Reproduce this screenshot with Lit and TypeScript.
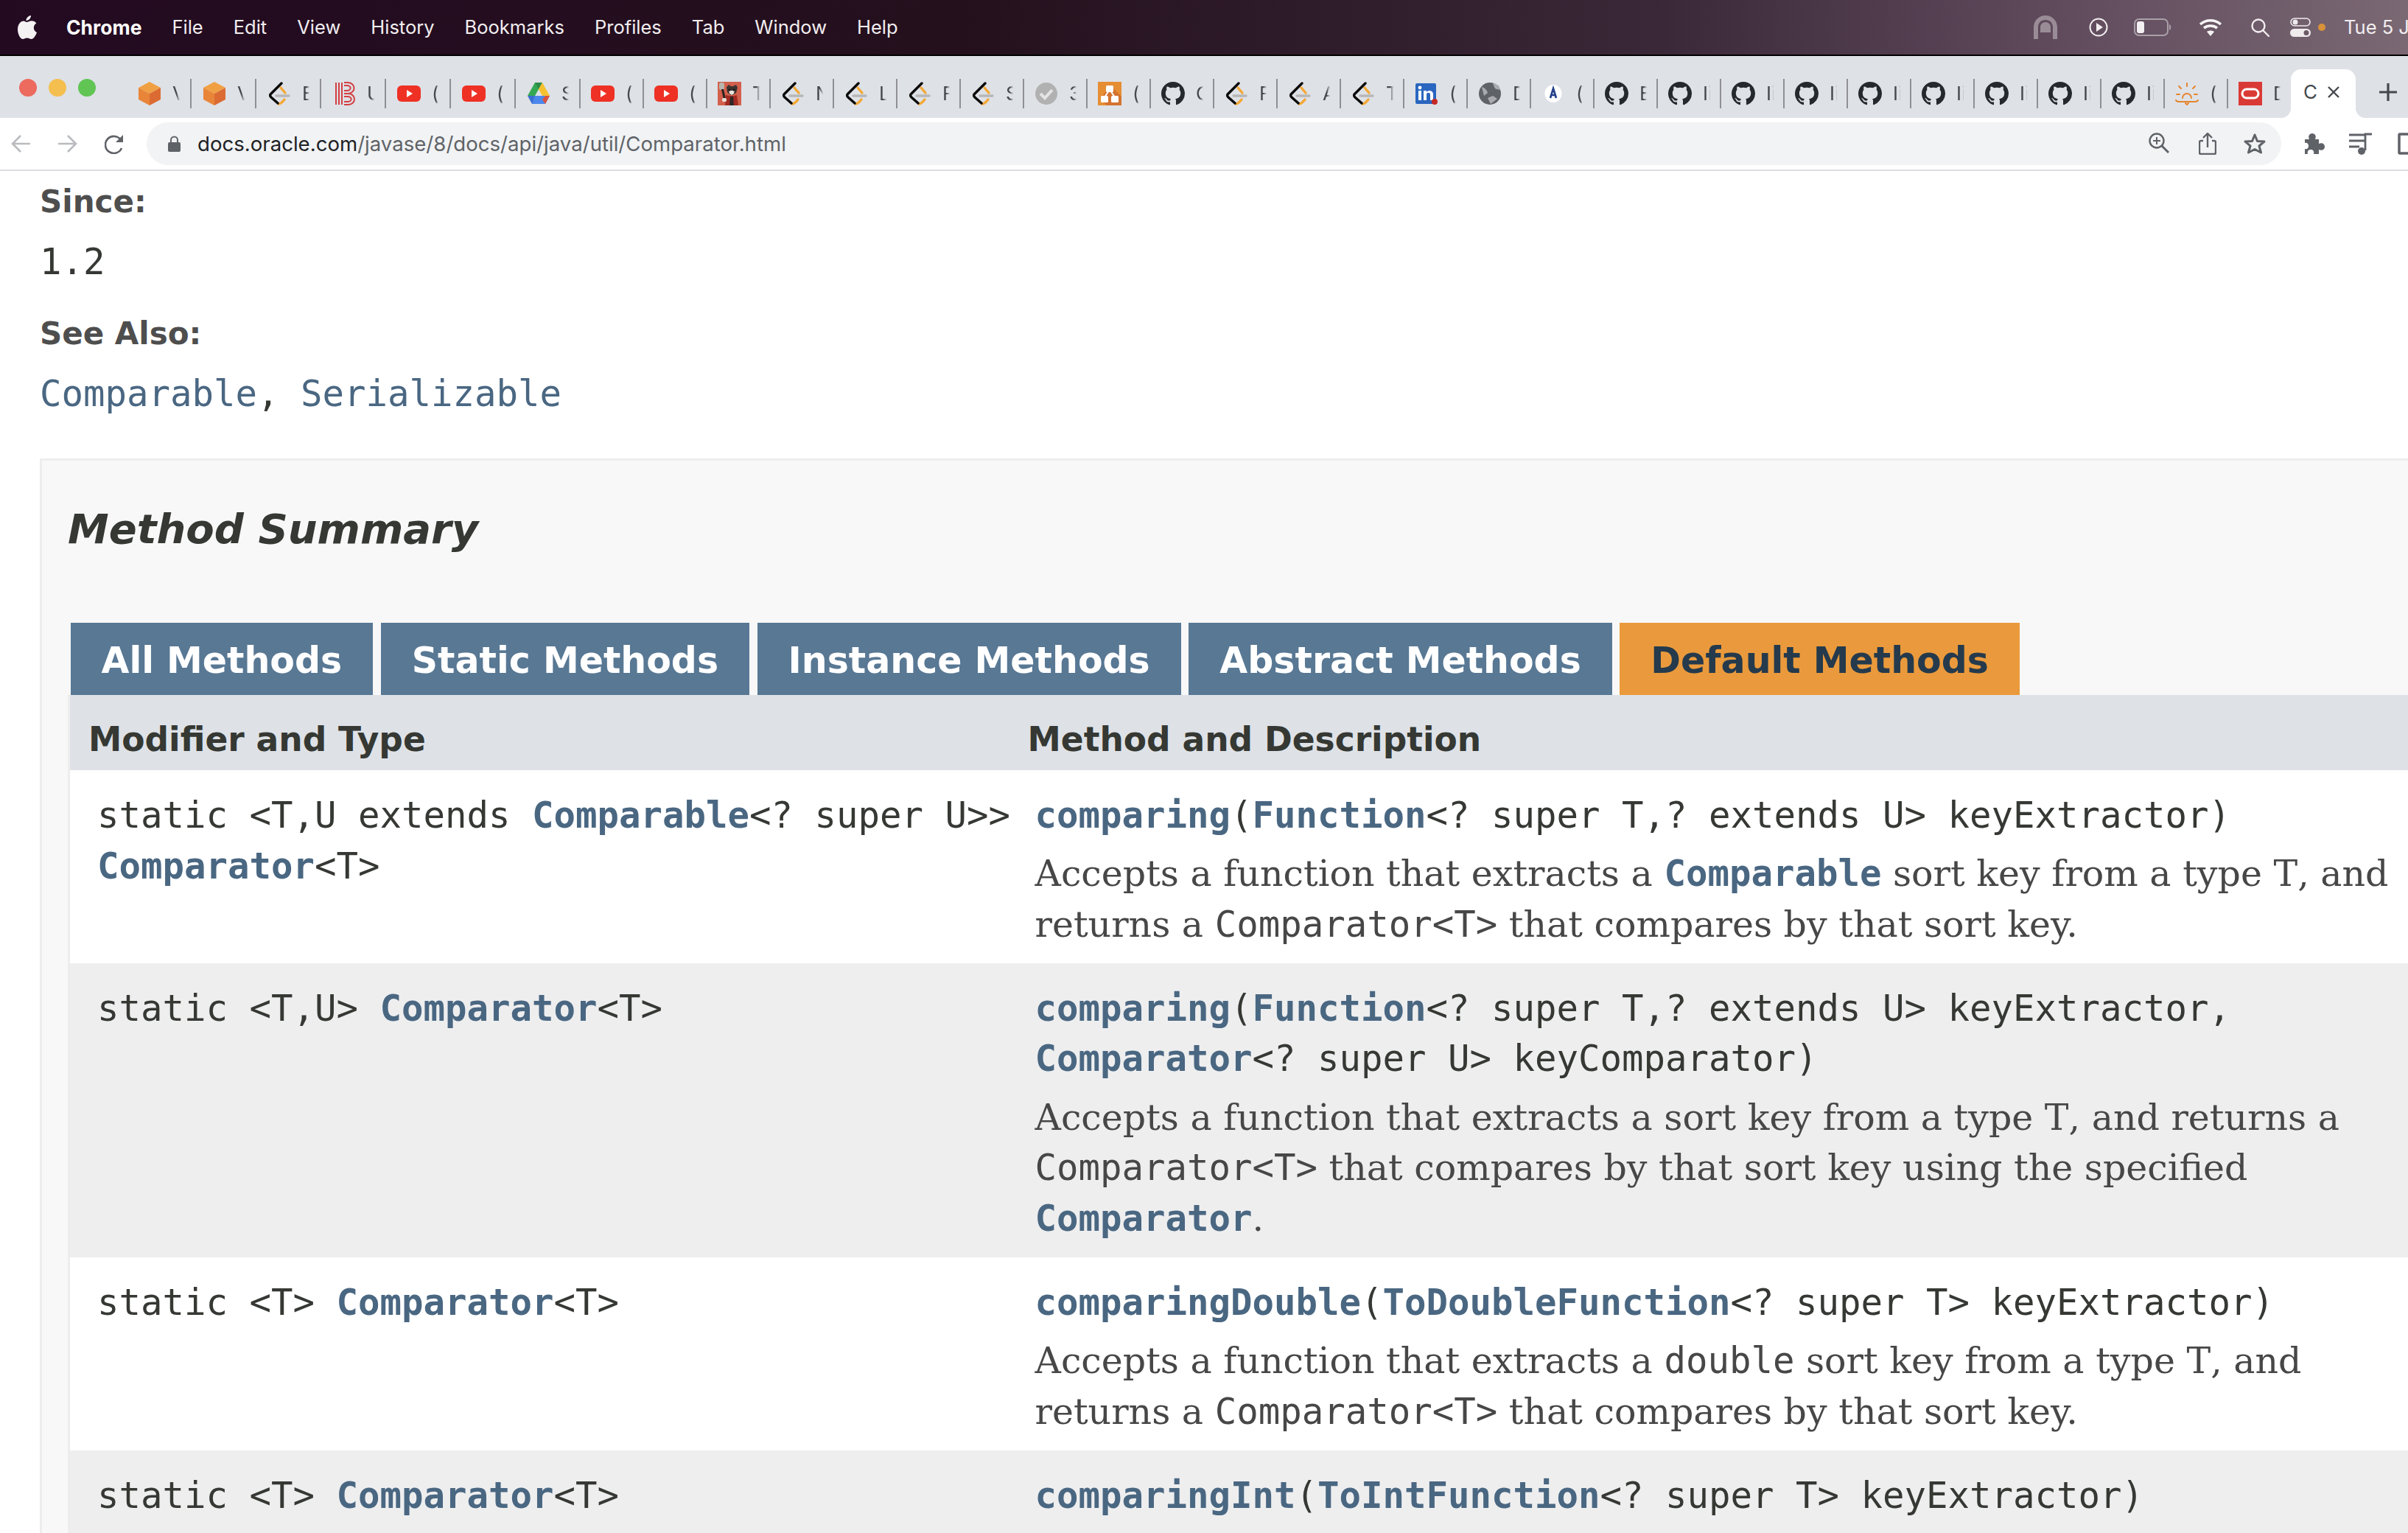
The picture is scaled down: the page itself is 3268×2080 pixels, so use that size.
import { css, html, LitElement, TemplateResult } from 'lit';
import { customElement } from 'lit/decorators.js';

const GITHUB =
  'M8 0C3.58 0 0 3.58 0 8c0 3.54 2.29 6.53 5.47 7.59.4.07.55-.17.55-.38 0-.19-.01-.82-.01-1.49-2.01.37-2.53-.49-2.69-.94-.09-.23-.48-.94-.82-1.13-.28-.15-.68-.52-.01-.53.63-.01 1.08.58 1.23.82.72 1.21 1.87.87 2.33.66.07-.52.28-.87.51-1.07-1.78-.2-3.64-.89-3.64-3.95 0-.87.31-1.59.82-2.15-.08-.2-.36-1.02.08-2.12 0 0 .67-.21 2.2.82.64-.18 1.32-.27 2-.27.68 0 1.36.09 2 .27 1.53-1.04 2.2-.82 2.2-.82.44 1.1.16 1.92.08 2.12.51.56.82 1.27.82 2.15 0 3.07-1.87 3.75-3.65 3.95.29.25.54.73.54 1.48 0 1.07-.01 1.93-.01 2.2 0 .21.15.46.55.38A8.013 8.013 0 0016 8c0-4.42-3.58-8-8-8z';

const favicons: Record<string, TemplateResult> = {
  box: html`<svg viewBox="0 0 32 32">
    <polygon points="16,0 31,8 16,16 1,8" fill="#f0a043" />
    <polygon points="1,8 16,16 16,32 1,24" fill="#e98538" />
    <polygon points="31,8 16,16 16,32 31,24" fill="#dc6b33" />
  </svg>`,
  leet: html`<svg viewBox="0 0 32 32" fill="none" stroke-width="3.400" stroke-linecap="round" stroke-linejoin="round">
    <path d="M12 19h17" stroke="#b7b7b7" />
    <path d="M18 8l6 7M15 30c3 0 5-2 8-6" stroke="#f4a836" />
    <path d="M19 2L4 17c-1 2 0 3 1 4l9 8" stroke="#0b0b0b" />
  </svg>`,
  book: html`<svg viewBox="0 0 32 32" fill="none" stroke="#d33f42" stroke-width="2">
    <path d="M5 1v30M9 1v30M13 1v30M16 1h5a8 7 0 010 15h-5M16 16h6a8 7.500 0 010 15h-6M16 5h4a4 3 0 010 7h-4M16 20h5a4 3 0 010 7h-5" />
  </svg>`,
  yt: html`<svg viewBox="0 0 32 32">
    <rect x="0" y="5" width="32" height="22" rx="6" fill="#ee3124" />
    <polygon points="13,11 13,21 21,16" fill="#fff" />
  </svg>`,
  drive: html`<svg viewBox="0 0 32 32">
    <polygon points="11,1 21,1 11,19 1,19" fill="#34a853" />
    <polygon points="11,1 21,1 16,10" fill="#2f8a49" />
    <polygon points="21,1 31,19 21,19 16,10" fill="#f6c12f" />
    <polygon points="7,19 31,19 25,30 7,30" fill="#4c87ec" />
    <polygon points="1,19 7,19 11,19 7,30" fill="#3b6fd1" />
    <polygon points="25,19 31,19 25,30 21,24" fill="#d9543f" />
  </svg>`,
  raccoon: html`<svg viewBox="0 0 32 32">
    <rect width="32" height="32" fill="#d2604c" />
    <rect x="2" y="1" width="7" height="10" rx="3" fill="#b9b6ae" />
    <path d="M5 10l3 14 3-1-3-13z" fill="#2b2321" />
    <path d="M12 7l3-3 3 2h3l4-2 2 4-2 7-5 3h-3l-4-4z" fill="#3a3330" />
    <path d="M15 11l4 1 4-1-1 5-3 2-3-2z" fill="#e9e3da" />
    <circle cx="16" cy="11" r="1.600" fill="#191514" />
    <circle cx="22" cy="11" r="1.600" fill="#191514" />
    <path d="M11 18l5 1h6l4-1 2 14H10z" fill="#a32a22" />
    <path d="M17 20h4l1 12h-6z" fill="#2f2725" />
    <rect x="6" y="22" width="6" height="5" rx="2" fill="#e6e0d8" />
  </svg>`,
  check: html`<svg viewBox="0 0 32 32">
    <circle cx="16" cy="16" r="15" fill="#b1b1b1" />
    <path d="M8 16l6 6 10-11" fill="none" stroke="#e4e4e4" stroke-width="4" />
  </svg>`,
  drawio: html`<svg viewBox="0 0 32 32">
    <rect width="32" height="32" fill="#e68e33" />
    <path d="M16 4l16 16v12H12L4 24z" fill="#d4732f" />
    <path d="M15 12L9 21M17 12l6 9" stroke="#fff" stroke-width="2" />
    <rect x="11" y="5" width="10" height="9" rx="1.500" fill="#fff" />
    <rect x="4" y="19" width="10" height="9" rx="1.500" fill="#fff" />
    <rect x="18" y="19" width="10" height="9" rx="1.500" fill="#fff" />
  </svg>`,
  github: html`<svg viewBox="0 0 16 16"><path d=${GITHUB} fill="#24292e" /></svg>`,
  linkedin: html`<svg viewBox="0 0 32 32">
    <rect x="1" y="2" width="28" height="28" rx="2" fill="#2a66bf" />
    <rect x="5" y="12" width="4" height="13" fill="#fff" />
    <circle cx="7" cy="8" r="2.400" fill="#fff" />
    <path d="M12 12h4v2c2-3 8-3 9 2v9h-4v-8c0-3-5-3-5 0v8h-4z" fill="#fff" />
    <circle cx="27" cy="27" r="4" fill="#c52a25" />
  </svg>`,
  globe: html`<svg viewBox="0 0 32 32">
    <circle cx="16" cy="16" r="15" fill="#5f6368" />
    <path d="M5 7c4 1 7 4 8 8l-5 4zM19 1c3 3 2 8 6 9l5 1-2-6zM13 22l7-3 6 4-9 7z" fill="#a9abae" />
  </svg>`,
  a: html`<svg viewBox="0 0 32 32">
    <ellipse cx="16" cy="16" rx="11.500" ry="12" fill="#fff" />
    <path d="M12 22l4-13 4 13M13.500 18h5" fill="none" stroke="#23408a" stroke-width="2.600" />
  </svg>`,
  sun: html`<svg viewBox="0 0 32 32" fill="none" stroke="#e5852f" stroke-width="2" stroke-linecap="round">
    <path d="M10 22a6 6 0 1112 0M16 2v4M5 6l3 3M27 6l-3 3M2 17h4M26 17h4M1 25c1 2 3 2 4 2h22c1 0 3 0 4-2M14 29l2 2 2-2" />
  </svg>`,
  oracle: html`<svg viewBox="0 0 32 32">
    <rect width="32" height="32" fill="#da3a36" />
    <rect x="5" y="10" width="22" height="12" rx="6" fill="none" stroke="#fff" stroke-width="3" />
  </svg>`,
};

const TABS: [string, string][] = [
  ['box', 'V'], ['box', 'V'], ['leet', 'E'], ['book', 'U'], ['yt', '('], ['yt', '('], ['drive', 'S'],
  ['yt', '('], ['yt', '('], ['raccoon', 'T'], ['leet', 'N'], ['leet', 'L'], ['leet', 'F'], ['leet', 'S'],
  ['check', '3'], ['drawio', '('], ['github', 'C'], ['leet', 'F'], ['leet', 'A'], ['leet', 'T'],
  ['linkedin', '('], ['globe', 'D'], ['a', '('], ['github', 'E'], ['github', 'Ii'], ['github', 'Ii'],
  ['github', 'Ii'], ['github', 'Ii'], ['github', 'Ii'], ['github', 'Ii'], ['github', 'Ii'], ['github', 'Ii'],
  ['sun', '('], ['oracle', 'D'],
];

const MENU = ['File', 'Edit', 'View', 'History', 'Bookmarks', 'Profiles', 'Tab', 'Window', 'Help'];
const CAPTIONS = ['All Methods', 'Static Methods', 'Instance Methods', 'Abstract Methods', 'Default Methods'];

@customElement('app-root')
export class AppRoot extends LitElement {
  static styles = css`
    :host {
      display: block;
    }
    .page {
      width: 3268px;
      height: 2080px;
      overflow: hidden;
      background: #fff;
    }

    /* macOS menu bar */
    .menubar {
      height: 74px;
      border-bottom: 2px solid #000;
      display: flex;
      align-items: center;
      background: linear-gradient(90deg, #230a21 0, #24101d 40%, #3a2838 69%, #5f4a5c 85%, #7a6873 100%);
      color: #f2eef0;
      font: 25.5px 'Inter', 'Liberation Sans', sans-serif;
      white-space: nowrap;
      overflow: hidden;
    }
    .apple {
      width: 26px;
      height: 34px;
      margin-left: 24px;
      margin-right: 40px;
    }
    .menu {
      display: flex;
      gap: 41px;
      padding-bottom: 1px;
    }
    .menu b {
      font-weight: 700;
      font-size: 26.500px;
      color: #fff;
    }
    .status {
      margin-left: auto;
      display: flex;
      align-items: center;
      width: 508px;
      flex: none;
    }
    .status svg {
      display: block;
      flex: none;
    }
    .s-play { margin-left: 43px; }
    .s-batt { margin-left: 35px; }
    .s-wifi { margin-left: 37px; }
    .s-find { margin-left: 39px; }
    .s-ctrl { margin-left: 28px; }
    .s-dot { margin-left: 10px; }
    .s-clock { margin-left: 25px; padding-bottom: 1px; }

    /* tab strip */
    .strip {
      height: 84px;
      display: flex;
      background: #dee1e6;
      color: #45484d;
      font: 26px 'Inter', 'Liberation Sans', sans-serif;
    }
    .lights {
      width: 171px;
      flex: none;
      box-sizing: border-box;
      padding: 31px 0 0 26px;
      display: flex;
      gap: 16px;
    }
    .lights i {
      width: 24px;
      height: 24px;
      border-radius: 50%;
    }
    .tab {
      flex: none;
      width: 86px;
      height: 40px;
      margin-top: 31px;
      box-sizing: border-box;
      position: relative;
      display: flex;
      align-items: center;
    }
    .tab.wide {
      width: 88px;
    }
    .tab::after {
      content: '';
      position: absolute;
      right: -1px;
      top: 0;
      width: 2px;
      height: 40px;
      background: #8e9094;
    }
    .tab.last::after {
      display: none;
    }
    .fav {
      width: 32px;
      height: 32px;
      margin-left: 15px;
      flex: none;
    }
    .tab.wide .fav {
      margin-left: 16px;
    }
    .fav svg {
      display: block;
      width: 32px;
      height: 32px;
    }
    .title {
      margin-left: 15px;
      width: 12px;
      overflow: hidden;
      white-space: nowrap;
      line-height: 40px;
      -webkit-mask-image: linear-gradient(90deg, #000 45%, transparent 85%);
      mask-image: linear-gradient(90deg, #000 45%, transparent 85%);
    }
    .active {
      flex: none;
      width: 88px;
      margin-top: 18px;
      height: 66px;
      background: #fff;
      border-radius: 14px 14px 0 0;
      position: relative;
      display: flex;
      align-items: flex-start;
      padding: 16px 0 0 17px;
      box-sizing: border-box;
      line-height: 30px;
    }
    .active::before,
    .active::after {
      content: '';
      position: absolute;
      bottom: 0;
      width: 14px;
      height: 14px;
    }
    .active::before {
      left: -14px;
      background: radial-gradient(circle at 0 0, transparent 14px, #fff 14.5px);
    }
    .active::after {
      right: -14px;
      background: radial-gradient(circle at 100% 0, transparent 14px, #fff 14.5px);
    }
    .close {
      width: 18px;
      height: 18px;
      margin: 6px 0 0 13px;
    }
    .plus {
      width: 24px;
      height: 24px;
      margin: 37px 0 0 32px;
      flex: none;
    }

    /* toolbar */
    .toolbar {
      height: 70px;
      border-bottom: 2px solid #dadce0;
      background: #fff;
      display: flex;
      align-items: center;
      overflow: hidden;
    }
    .nav {
      display: flex;
      width: 199px;
      flex: none;
      align-items: center;
      padding-left: 15px;
      box-sizing: border-box;
    }
    .nav svg {
      display: block;
      flex: none;
    }
    .fwd { margin-left: 38px; }
    .reload { margin-left: 37px; }
    .omni {
      width: 2897px;
      height: 58px;
      flex: none;
      box-sizing: border-box;
      border-radius: 29px;
      background: #f1f3f4;
      display: flex;
      align-items: center;
      padding: 0 21px 0 29px;
      font: 27.6px 'Inter', 'Liberation Sans', sans-serif;
      color: #5f6368;
      white-space: nowrap;
    }
    .omni svg {
      display: block;
      flex: none;
    }
    .omni b {
      font-weight: 400;
      color: #202124;
    }
    .url {
      margin-left: 23px;
      flex: 1;
    }
    .o-share { margin-left: 40px; }
    .o-star { margin-left: 37px; }
    .ext {
      display: flex;
      align-items: center;
      flex: none;
    }
    .ext svg {
      display: block;
      flex: none;
    }
    .e-puzzle { margin-left: 29px; }
    .e-media { margin-left: 33px; }
    .e-side { margin-left: 34px; }

    /* javadoc page */
    .doc {
      width: 3500px;
      padding: 13px 0 0 54px;
      box-sizing: border-box;
      color: #353833;
      font-family: 'DejaVu Sans', Arial, sans-serif;
    }
    .label {
      font-size: 42px;
      line-height: 58.8px;
      font-weight: 700;
      color: #4e4e4e;
    }
    .code {
      font-family: 'DejaVu Sans Mono', monospace;
      font-size: 49px;
      line-height: 68.6px;
    }
    a {
      color: #4a6782;
      text-decoration: none;
    }
    .since { margin-top: 18px; }
    .also { margin-top: 33.7px; }
    .links { margin-top: 18px; }
    .summary {
      margin-top: 52.7px;
      border: 3.5px solid #ededed;
      background: #f8f8f8;
      padding: 0 0 0 35px;
    }
    h3 {
      margin: 54px 0 87.5px;
      font-size: 56px;
      line-height: 78.4px;
      font-style: italic;
      font-weight: 700;
      color: #353833;
    }
    .caps {
      display: flex;
      gap: 10.5px;
      margin-left: 3.5px;
    }
    .cap {
      padding: 23.5px 42px 18.5px;
      font-size: 49px;
      line-height: 56px;
      font-weight: 700;
      background: #587894;
      color: #fff;
      white-space: nowrap;
    }
    .cap.on {
      background: #ea9a3c;
      color: #253a4c;
    }
    .table {
      border-left: 3.5px solid #ededed;
      background: #fff;
      width: 3400px;
    }
    .row {
      display: grid;
      grid-template-columns: 1271.5px 1fr;
      padding-bottom: 17.5px;
    }
    .row.alt {
      background: #eeeeef;
    }
    .row.head {
      background: #dee2e7;
      padding: 0;
      height: 102px;
    }
    .row.head div {
      padding: 28.5px 0 0 25px;
      font-size: 45.5px;
      line-height: 63.7px;
      font-weight: 700;
    }
    .row.head div + div {
      padding-left: 28px;
    }
    .first {
      padding: 28px 0 0 37px;
      white-space: nowrap;
    }
    .second {
      padding: 28px 0 0 38px;
      width: 1938px;
      box-sizing: border-box;
    }
    .code b {
      font-weight: 700;
    }
    .block {
      margin-top: 10.5px;
      font-family: 'DejaVu Serif', Georgia, serif;
      font-size: 49px;
      line-height: 68.6px;
      color: #474747;
    }
    .block code {
      font-family: 'DejaVu Sans Mono', monospace;
    }
    .block b {
      font-family: 'DejaVu Sans Mono', monospace;
    }
    .nokern {
      font-kerning: none;
    }
  `;

  private renderMethodRows() {
    const lnk = (t: string) => html`<a><b>${t}</b></a>`;
    const mono = (t: string) => html`<code>${t}</code>`;
    const typeT = html`<span class="nokern">T,</span>`;
    return html`
      <div class="row">
        <div class="first code">static &lt;T,U extends ${lnk('Comparable')}&lt;? super U&gt;&gt;<br />${lnk('Comparator')}&lt;T&gt;</div>
        <div class="second">
          <div class="code">${lnk('comparing')}(${lnk('Function')}&lt;? super T,? extends U&gt; keyExtractor)</div>
          <div class="block">Accepts a function that extracts a ${lnk('Comparable')} sort key from a type ${typeT} and returns a ${mono('Comparator<T>')} that compares by that sort key.</div>
        </div>
      </div>
      <div class="row alt">
        <div class="first code">static &lt;T,U&gt; ${lnk('Comparator')}&lt;T&gt;</div>
        <div class="second">
          <div class="code">${lnk('comparing')}(${lnk('Function')}&lt;? super T,? extends U&gt; keyExtractor, ${lnk('Comparator')}&lt;? super U&gt; keyComparator)</div>
          <div class="block">Accepts a function that extracts a sort key from a type ${typeT} and returns a ${mono('Comparator<T>')} that compares by that sort key using the specified ${lnk('Comparator')}.</div>
        </div>
      </div>
      <div class="row">
        <div class="first code">static &lt;T&gt; ${lnk('Comparator')}&lt;T&gt;</div>
        <div class="second">
          <div class="code">${lnk('comparingDouble')}(${lnk('ToDoubleFunction')}&lt;? super T&gt; keyExtractor)</div>
          <div class="block">Accepts a function that extracts a ${mono('double')} sort key from a type ${typeT} and returns a ${mono('Comparator<T>')} that compares by that sort key.</div>
        </div>
      </div>
      <div class="row alt">
        <div class="first code">static &lt;T&gt; ${lnk('Comparator')}&lt;T&gt;</div>
        <div class="second">
          <div class="code">${lnk('comparingInt')}(${lnk('ToIntFunction')}&lt;? super T&gt; keyExtractor)</div>
          <div class="block">Accepts a function that extracts an ${mono('int')} sort key from a type ${typeT} and returns a ${mono('Comparator<T>')} that compares by that sort key.</div>
        </div>
      </div>
    `;
  }

  private renderMenubar() {
    return html`
      <div class="menubar">
        <svg class="apple" viewBox="0 0 26 34" fill="#f4f1f3">
          <path d="M18 1c.3 3-2.500 7-6.500 7C11.200 4.500 14.500 1.500 18 1zM12 10c2 0 4-1.800 7-1.800 2.500 0 5 1.200 6.400 3.400-5.200 3-4.400 10.400 .6 12.400-1.400 4-4.400 9-7.400 9-2.200 0-3.200-1.400-5.800-1.400-2.800 0-3.800 1.400-5.800 1.400C3.400 33 0 26 0 20 0 13 4 8.500 8 8.500c1.600 0 3 1.500 4 1.500z" />
        </svg>
        <div class="menu">
          <b>Chrome</b>
          ${MENU.map((m) => html`<span>${m}</span>`)}
        </div>
        <div class="status">
          <svg width="32" height="32" viewBox="0 0 32 32" fill="#9a8c97">
            <path d="M0 32V16C0 7 7 0 16 0s16 7 16 16v16h-6V16c0-6-4-10-10-10S6 10 6 16v16z" />
            <path d="M9 23v-7c0-4 3-7 7-7s7 3 7 7v7z" />
          </svg>
          <svg class="s-play" width="26" height="26" viewBox="0 0 26 26">
            <circle cx="13" cy="13" r="11.500" fill="none" stroke="#f2eef0" stroke-width="2" />
            <polygon points="10,7 10,19 19,13" fill="#f2eef0" />
          </svg>
          <svg class="s-batt" width="51" height="24" viewBox="0 0 51 24">
            <rect x="1" y="1" width="45" height="22" rx="6" fill="none" stroke="#aaa0a8" stroke-width="2" />
            <rect x="4" y="4" width="10" height="16" rx="3" fill="#f4f0f2" />
            <path d="M48 8c3 1 3 7 0 8z" fill="#aaa0a8" />
          </svg>
          <svg class="s-wifi" width="32" height="24" viewBox="0 0 32 24" fill="none" stroke="#f6f3f5" stroke-width="3.600">
            <path d="M2 8c8-7 20-7 28 0M7 13c5-4 13-4 18 0" />
            <path d="M16 24l-5-6c3-2 7-2 10 0z" fill="#f6f3f5" stroke="none" />
          </svg>
          <svg class="s-find" width="25" height="25" viewBox="0 0 25 25" fill="none" stroke="#f2eef0" stroke-width="2.400">
            <circle cx="10" cy="10" r="8.500" />
            <path d="M16 16l8 8" stroke-linecap="round" />
          </svg>
          <svg class="s-ctrl" width="28" height="26" viewBox="0 0 28 26">
            <rect x="1" y="1" width="26" height="10" rx="5" fill="none" stroke="#efebed" stroke-width="1.600" />
            <circle cx="7" cy="6" r="3.500" fill="#efebed" />
            <rect y="15" width="28" height="11" rx="5.500" fill="#efebed" />
            <circle cx="22" cy="20.500" r="3.500" fill="#6a5862" />
          </svg>
          <svg class="s-dot" width="10" height="10" viewBox="0 0 10 10"><circle cx="5" cy="5" r="5" fill="#d9923a" /></svg>
          <span class="s-clock">Tue 5 Jul</span>
        </div>
      </div>
    `;
  }

  private renderStrip() {
    return html`
      <div class="strip">
        <div class="lights">
          <i style="background:#ec6a5e"></i>
          <i style="background:#f4bf4f"></i>
          <i style="background:#61c554"></i>
        </div>
        ${TABS.map(
          ([icon, title], i) => html`
            <div class="tab ${i < 7 ? 'wide' : ''} ${i === TABS.length - 1 ? 'last' : ''}">
              <span class="fav">${favicons[icon]}</span>
              <span class="title">${title}</span>
            </div>
          `,
        )}
        <div class="active">
          <span>C</span>
          <svg class="close" viewBox="0 0 18 18" stroke="#45484d" stroke-width="2.400">
            <path d="M2 2l14 14M16 2L2 16" />
          </svg>
        </div>
        <svg class="plus" viewBox="0 0 24 24" stroke="#45484d" stroke-width="3.200">
          <path d="M12 0v24M0 12h24" />
        </svg>
      </div>
    `;
  }

  private renderToolbar() {
    return html`
      <div class="toolbar">
        <div class="nav">
          <svg width="26" height="26" viewBox="0 0 26 26" fill="none" stroke="#b9bbbe" stroke-width="2.600">
            <path d="M26 13H3M13 2L2 13l11 11" />
          </svg>
          <svg class="fwd" width="26" height="26" viewBox="0 0 26 26" fill="none" stroke="#b9bbbe" stroke-width="2.600">
            <path d="M0 13h23M13 2l11 11-11 11" />
          </svg>
          <svg class="reload" width="27" height="27" viewBox="0 0 27 27" fill="none" stroke="#5f6368" stroke-width="2.600">
            <path d="M23 19a11.500 11.500 0 11-1-11" />
            <path d="M25 1v10H15z" fill="#5f6368" stroke="none" />
          </svg>
        </div>
        <div class="omni">
          <svg width="17" height="22" viewBox="0 0 17 22" fill="#5f6368">
            <rect y="9" width="17" height="13" rx="2" />
            <path d="M4 10V6a4.500 4.500 0 019 0v4" fill="none" stroke="#5f6368" stroke-width="2" />
          </svg>
          <span class="url"><b>docs.oracle.com</b>/javase/8/docs/api/java/util/Comparator.html</span>
          <svg width="28" height="30" viewBox="0 0 28 30" fill="none" stroke="#5f6368" stroke-width="2.400">
            <circle cx="11" cy="11" r="9.500" />
            <path d="M11 6v10M6 11h10" stroke-width="2" />
            <path d="M18 18l9 9" stroke-width="3" />
          </svg>
          <svg class="o-share" width="24" height="30" viewBox="0 0 24 30" fill="none" stroke="#5f6368" stroke-width="2.400">
            <path d="M6 11H3a2 2 0 00-2 2v14a2 2 0 002 2h18a2 2 0 002-2V13a2 2 0 00-2-2h-3M12 20V2M6 7l6-6 6 6" />
          </svg>
          <svg class="o-star" width="30" height="30" viewBox="0 0 30 30" fill="none" stroke="#5f6368" stroke-width="3" stroke-linejoin="round">
            <polygon points="15,3 18.500,11.500 28,12 21,18 23.500,27 15,22.500 6.500,27 9,18 2,12 11.500,11.500" />
          </svg>
        </div>
        <div class="ext">
          <svg class="e-puzzle" width="30" height="30" viewBox="0 0 30 30" fill="#5f6368">
            <path d="M3 9h6c-2-4 0-8 4-8s6 4 4 8h5v6c4-2 8 0 8 4s-4 6-8 4v6h-7c1-4-1-6-4-6s-5 2-4 6H3v-7c3 1 5-1 5-4s-2-5-5-4z" />
          </svg>
          <svg class="e-media" width="32" height="30" viewBox="0 0 32 30" fill="none" stroke="#5f6368" stroke-width="2.800">
            <path d="M0 3h22M0 11h22M0 19h14M22 24V2h9" />
            <circle cx="17" cy="24" r="5" fill="#5f6368" stroke="none" transform="translate(0 1)" />
          </svg>
          <svg class="e-side" width="30" height="30" viewBox="0 0 30 30" fill="none" stroke="#5f6368" stroke-width="3.500">
            <rect x="2" y="2" width="40" height="26" rx="1" />
          </svg>
        </div>
      </div>
    `;
  }

  protected render(): unknown {
    return html`
      <div class="page">
        ${this.renderMenubar()} ${this.renderStrip()} ${this.renderToolbar()}
        <div class="doc">
          <div class="label">Since:</div>
          <div class="code since">1.2</div>
          <div class="label also">See Also:</div>
          <div class="code links"><a>Comparable</a>, <a>Serializable</a></div>
          <div class="summary">
            <h3>Method Summary</h3>
            <div class="caps">
              ${CAPTIONS.map((c, i) => html`<div class="cap ${i === 4 ? 'on' : ''}">${c}</div>`)}
            </div>
            <div class="table">
              <div class="row head">
                <div>Modifier and Type</div>
                <div>Method and Description</div>
              </div>
              ${this.renderMethodRows()}
            </div>
          </div>
        </div>
      </div>
    `;
  }
}
